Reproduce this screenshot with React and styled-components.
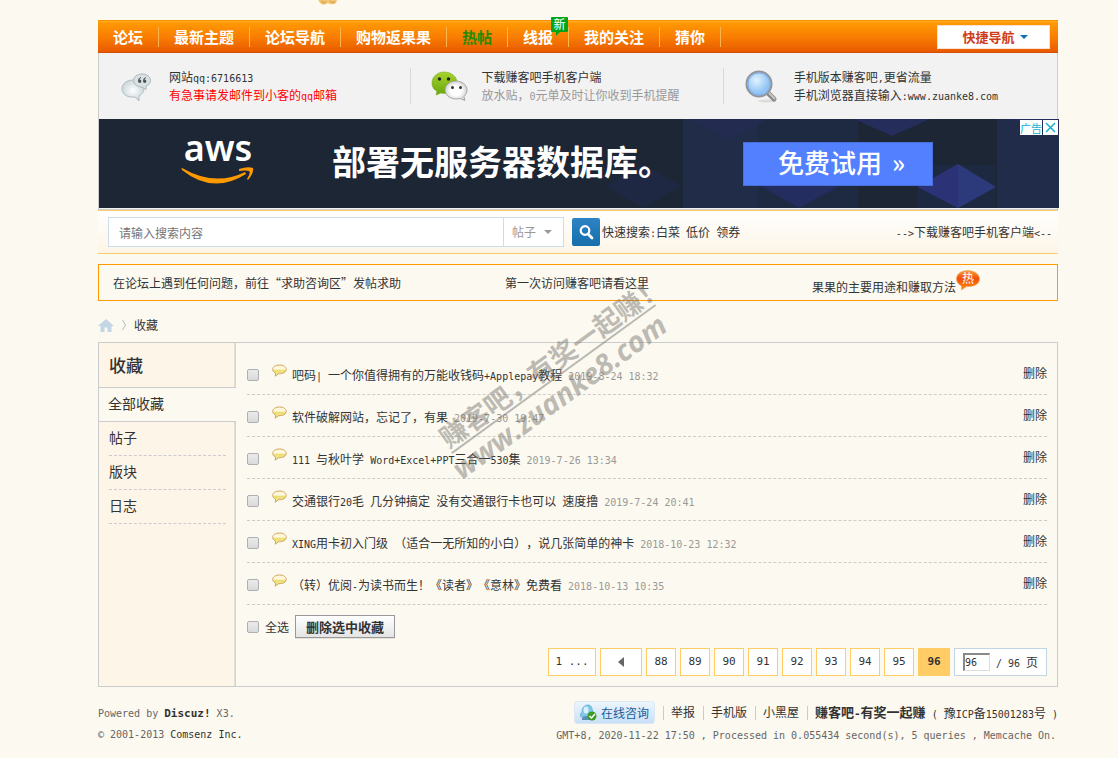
import React from 'react';
import styled, { createGlobalStyle } from 'styled-components';

const CJK = '"Noto Sans CJK SC", "Liberation Sans", sans-serif';
const MONO = '"DejaVu Sans Mono", "Liberation Mono", monospace';

const GlobalStyle = createGlobalStyle`
  * { box-sizing: border-box; }
  body {
    margin: 0;
    background: #fcf9f0;
    color: #333;
    font: 12px/18px ${CJK};
    text-spacing-trim: space-all;
  }
  a { color: inherit; text-decoration: none; }
  ul { list-style: none; margin: 0; padding: 0; }
  button, input, select { font: inherit; color: inherit; }
  svg { display: block; flex: none; }
`;

const Latin = styled.span`
  font-family: ${MONO};
  font-size: ${(p) => (p.$bold ? 11 : 10)}px;
  line-height: 1;
  white-space: pre-wrap;
`;

/* Sets runs of Latin letters, digits and spaces in the half-width face. */
function Mixed({ children, bold }) {
  return String(children)
    .split(/([\x20-\x7e©]+)/)
    .filter(Boolean)
    .map((part, i) =>
      /^[\x20-\x7e©]/.test(part) ? (
        <Latin key={i} $bold={bold}>{part}</Latin>
      ) : (
        <React.Fragment key={i}>{part}</React.Fragment>
      )
    );
}

const Page = styled.div`
  padding: 0 60px 0 98px;
  min-width: 1118px;
`;

const Top = styled.div`
  height: 20px;
  padding-left: 220px;
`;

/* ---------- navigation ---------- */
const Nav = styled.nav`
  display: flex;
  align-items: center;
  height: 33px;
  padding-right: 8px;
  border: 1px solid #f79a1c;
  border-width: 1px 0;
  border-top-color: #fb9200;
  border-bottom-color: #d24f05;
  background: linear-gradient(#ffae2e 0, #ff9803 2px, #f97f02 50%, #e85a00 100%);
`;

const NavList = styled.ul`
  display: flex;
  flex: 1;
`;

const NavItem = styled.li`
  position: relative;
  padding: 0 15px;
  border-right: 1px solid #ffb54f;
  font-size: 15px;
  line-height: 20px;
  font-weight: bold;
  color: ${(p) => (p.$hot ? '#228b00' : '#fff')};
`;

const NewBadge = styled.span`
  position: absolute;
  right: 0;
  top: -10px;
  width: 17px;
  height: 15px;
  border-radius: 1px;
  background: #03a517;
  color: #fff;
  font-size: 12px;
  line-height: 14px;
  font-weight: normal;
  text-align: center;

  &::after {
    content: '';
    position: absolute;
    left: 5px;
    top: 15px;
    border: solid transparent;
    border-width: 0 4px 4px 0;
    border-left: 0;
    border-top: 4px solid #03a517;
  }
`;

const QuickNav = styled.button`
  display: flex;
  align-items: center;
  justify-content: center;
  gap: 5px;
  width: 113px;
  height: 24px;
  padding: 0 0 0 3px;
  border: 1px solid #f6e3d4;
  background: #fff;
  color: #cf3c1c;
  font-size: 13px;
  font-weight: bold;
`;

/* ---------- info strip and banner ---------- */
const Panel = styled.section`
  padding-bottom: 1px;
  border: 1px solid #cdcdcd;
  border-top: 0;
  background: #f2f2f2;
`;

const InfoGrid = styled.div`
  display: grid;
  grid-template-columns: 15fr 15fr 16fr;
  padding: 15px 0;
`;

const InfoCell = styled.div`
  display: flex;
  align-items: center;
  gap: 10px;
  height: 36px;
  padding-left: 20px;
  border-right: ${(p) => (p.$last ? 0 : '1px solid #d9d9d9')};
`;

const InfoIcon = styled.span`
  width: 40px;
`;

const InfoLine = styled.div`
  color: ${(p) => p.$color || '#333'};
`;

const Banner = styled.div`
  position: relative;
  display: flex;
  align-items: center;
  height: 89px;
  margin-right: -2px;
  padding-left: 82px;
  background: #1c2635;
  color: #fff;
`;

const BannerArt = styled.svg`
  position: absolute;
  right: 0;
  top: 0;
`;

const AwsLogo = styled.div`
  display: flex;
  flex-direction: column;
  align-items: center;
  gap: 8px;
  width: 74px;
  padding-bottom: 6px;
  font: 600 36px/22px "Noto Sans", "Open Sans", sans-serif;
`;

const Headline = styled.strong`
  position: relative;
  flex: none;
  margin: 0 71px 0 77px;
  padding-bottom: 6px;
  font-size: 34px;
  line-height: 44px;
`;

const TrialButton = styled.a`
  position: relative;
  width: 190px;
  height: 44px;
  padding-left: 34px;
  border: 1px solid #4a70dc;
  background: #5380ff;
  font-size: 26px;
  line-height: 38px;
  font-weight: 500;
  white-space: nowrap;

  span { margin-left: 10px; }
`;

const AdChoices = styled.div`
  position: absolute;
  right: 1px;
  top: 1px;
  display: flex;
  gap: 1px;
`;

const AdTag = styled.span`
  height: 15px;
  width: ${(p) => (p.$wide ? 22 : 15)}px;
  display: flex;
  align-items: center;
  justify-content: center;
  background: #fff;
  color: #13b1d0;
  font-size: 11px;
  line-height: 14px;
`;

/* ---------- search ---------- */
const SearchBar = styled.form`
  display: flex;
  align-items: center;
  height: 44px;
  padding: 0 6px 0 10px;
  border: solid #ffcc66;
  border-width: 1px 0;
  background: linear-gradient(#fff, #fdf5e7);
`;

const SearchBox = styled.div`
  display: flex;
  align-items: center;
  width: 456px;
  height: 30px;
  border: 1px solid #cbdde8;
  background: #fff;
`;

const SearchInput = styled.input`
  flex: 1;
  min-width: 0;
  height: 28px;
  padding: 0 10px;
  border: 0;
  background: none;
  &::placeholder { color: #757575; opacity: 1; }
`;

const ScopeBox = styled.label`
  display: flex;
  align-items: center;
  gap: 4px;
  width: 60px;
  height: 28px;
  padding-left: 8px;
  border-left: 1px solid #cbdde8;
  color: #999;
`;

const ScopeSelect = styled.select`
  width: 28px;
  padding: 0;
  border: 0;
  background: none;
  appearance: none;
`;

const SearchButton = styled.button`
  width: 28px;
  height: 28px;
  margin: 0 2px 0 8px;
  padding: 5px;
  border: 0;
  border-radius: 2px;
  background: linear-gradient(#2f83c4, #146fab);
`;

const AppLink = styled.a`
  margin-left: auto;
`;

/* ---------- notices and breadcrumb ---------- */
const Notices = styled.section`
  display: grid;
  grid-template-columns: 392fr 307fr 245fr;
  align-items: center;
  height: 37px;
  margin-top: 10px;
  padding-left: 14px;
  border: 1px solid #ff9900;
`;

const HotNotice = styled.a`
  display: flex;
  align-items: flex-end;
  height: 26px;
`;

const HotMark = styled.span`
  position: relative;
  align-self: flex-start;
  color: #fff;

  b {
    position: absolute;
    inset: 0;
    font-size: 12px;
    line-height: 16px;
    font-weight: normal;
    text-align: center;
  }
`;

const Breadcrumb = styled.nav`
  display: flex;
  align-items: center;
  gap: 8px;
  height: 18px;
  margin: 15px 0 8px;
`;

/* ---------- main box ---------- */
const Main = styled.main`
  position: relative;
  display: flex;
  border: 1px solid #ccc;
`;

const Sidebar = styled.aside`
  width: 137px;
  background: linear-gradient(90deg, #fdf5e8 135px, #efe8dc 135px, #d9d5cc 136px);
`;

const SideTitle = styled.h1`
  margin: 0;
  padding: 0 10px;
  border-bottom: 1px solid #ccc;
  font-size: 17px;
  line-height: 44px;
  font-weight: 500;
`;

const SideItem = styled.li`
  height: 34px;
  font-size: 14px;
  line-height: 30px;
  ${(p) =>
    p.$active
      ? 'padding-left: 9px; border-bottom: 1px solid #ccc; background: #fcf9f0;'
      : 'margin: 0 10px; border-bottom: 1px dashed #ccc;'}
`;

const Content = styled.form`
  flex: 1;
  min-width: 0;
  padding: 10px;
  padding-left: 11px;
`;

const Row = styled.li`
  display: flex;
  align-items: center;
  height: 42px;
  padding-top: 2px;
  border-bottom: 1px dashed #ccc;
`;

const Check = styled.input.attrs({ type: 'checkbox' })`
  appearance: none;
  width: 12px;
  height: 12px;
  margin: 0;
  border: 1px solid #adb0b2;
  border-radius: 2px;
  background: linear-gradient(#ebebeb, #dadada);
  &:checked { background: #7795bd; }
`;

const RowIcon = styled.span`
  align-self: flex-start;
  margin: 9px 5px 0 13px;
`;

const Stamp = styled.time`
  margin-left: 6px;
  color: #999;
`;

const RemoveLink = styled.a`
  margin: 0 0 4px auto;
`;

const Actions = styled.div`
  display: flex;
  align-items: center;
  gap: 6px;
  height: 43px;
`;

const ActionLabel = styled.label`
  display: flex;
  align-items: center;
  gap: 6px;
`;

const DeleteButton = styled.button`
  height: 23px;
  padding: 0 8px;
  border: 1px solid #999;
  background: linear-gradient(#fff, #e4e4e4);
  box-shadow: 0 1px 0 #e6e3dc;
  width: 100px;
  font-size: 13px;
  line-height: 20px;
  font-weight: bold;
  white-space: nowrap;
`;

const Pager = styled.nav`
  display: flex;
  justify-content: flex-end;
  gap: 4px;
`;

const PageLink = styled.a`
  display: flex;
  align-items: center;
  justify-content: center;
  width: ${(p) => p.$width || 30}px;
  height: 28px;
  border: 1px solid #ffcc66;
  background: ${(p) => (p.$current ? '#ffcc66' : '#fff')};
  font: ${(p) => (p.$current ? 'bold' : 'normal')} 11px/18px ${MONO};
`;

const Jump = styled.label`
  display: flex;
  align-items: center;
  gap: 6px;
  width: 93px;
  height: 28px;
  padding-left: 8px;
  border: 1px solid #c2d5e3;
  background: #fff;
`;

const JumpInput = styled.input`
  width: 27px;
  height: 18px;
  padding: 0;
  border: 2px solid;
  border-width: 2px 1px 1px 2px;
  border-color: #888 #ddd #ddd #888;
  background: #fff;
  font: 10px/14px ${MONO};
`;

/* ---------- watermark ---------- */
const Watermark = styled.div`
  position: absolute;
  left: 455px;
  top: 37px;
  width: 280px;
  margin: -33px 0 0 -140px;
  transform: rotate(-36deg);
  color: rgba(116, 116, 108, 0.48);
  font-weight: bold;
  white-space: nowrap;
  pointer-events: none;
`;

const WatermarkSlogan = styled.div`
  margin: 0 14px;
  border-bottom: 2px solid currentColor;
  font-size: 27px;
  line-height: 31px;
`;

const WatermarkSite = styled.div`
  padding-left: 6px;
  font: italic bold 29px/32px "Open Sans", sans-serif;
`;

/* ---------- footer ---------- */
const Footer = styled.footer`
  display: flex;
  justify-content: space-between;
  padding: 14px 0 10px;
  color: #666;
`;

const Credit = styled.p`
  margin: 2px 0 3px;
  a { color: #333; }
`;

const FootLinks = styled.div`
  display: flex;
  align-items: center;
  justify-content: flex-end;
  color: #333;
`;

const FootLink = styled.a`
  height: 14px;
  margin-left: 8px;
  padding-left: 7px;
  border-left: 1px solid #ccc;
  line-height: 12px;
  font-size: ${(p) => (p.$bold ? 13 : 12)}px;
  font-weight: ${(p) => (p.$bold ? 'bold' : 'normal')};
`;

const Consult = styled.a`
  display: flex;
  align-items: center;
  gap: 4px;
  width: 81px;
  height: 23px;
  padding-left: 5px;
  border: 1px solid #dce8f4;
  border-radius: 3px;
  background: linear-gradient(#edf5fc, #c9dff8);
  color: #1a5c98;
`;

const Timing = styled.p`
  margin: 1px 2px 0 0;
  text-align: right;
`;

/* ---------- drawings ---------- */
const Caret = ({ color }) => (
  <svg width="8" height="4" viewBox="0 0 8 4"><path d="M0 0h8L4 4z" fill={color} /></svg>
);

const Mascot = () => (
  <svg width="20" height="5" viewBox="0 0 20 5">
    <path d="M0 0h19l-1 3q-3 2-6 1l-2-1q-4 3-7 1z" fill="#f1c673" />
    <path d="M3 1q3 3 5 1M12 1q3 3 5 1" stroke="#dc9948" fill="none" />
  </svg>
);

const QuoteIcon = () => (
  <svg width="34" height="32" viewBox="-2 0 34 32">
    <defs>
      <radialGradient id="qg"><stop offset="0" stopColor="#fff" /><stop offset="1" stopColor="#ccd7da" /></radialGradient>
    </defs>
    <path d="M12 10C6 10 1 13.500 1 18.500S5 27 11 27h3l4 4 0-5c3-2 5-4 5-8s-5-8-11-8z" fill="url(#qg)" stroke="#b0bec2" />
    <path d="M21 4c-5 0-8.500 3-8.500 6.500s4 6.500 8.500 6.500l4 2.500v-3.500c3-1 4.500-3 4.500-5.500 0-4-4-6.500-8.500-6.500z" fill="#d9e1e3" stroke="#a9b7bb" />
    <path d="M20 7q-3 1-3 4 0 2 1.700 2t1.700-1.700-1.900-1.800q0-1 1.500-1.500zM25 7q-3 1-3 4 0 2 1.700 2t1.700-1.700-1.900-1.800q0-1 1.500-1.500z" fill="#4b5558" />
  </svg>
);

const WechatIcon = () => (
  <svg width="38" height="32" viewBox="0 0 38 32">
    <defs>
      <linearGradient id="wg" x2="0" y2="1"><stop offset="0" stopColor="#a5d42b" /><stop offset="1" stopColor="#68a70b" /></linearGradient>
      <radialGradient id="ww"><stop offset=".5" stopColor="#fff" /><stop offset="1" stopColor="#d2d2d2" /></radialGradient>
    </defs>
    <path d="M13 2C6 2 1 7 1 13c0 4 2 7 5 8l-1 4 5-2c8 2 16-3 16-10S20 2 13 2z" fill="url(#wg)" stroke="#79a92b" strokeWidth=".6" />
    <path d="M25 11c-6 0-11 4-11 9s5 9 11 9l4-.5 5 2-1-4c2-2 3-4 3-6.500 0-5-5-9-11-9z" fill="url(#ww)" stroke="#999" strokeWidth=".8" />
    <circle cx="8.500" cy="9" r="1.700" fill="#222" /><circle cx="17.500" cy="9" r="1.700" fill="#222" />
    <circle cx="21.500" cy="17.500" r="1.500" fill="#333" /><circle cx="29.500" cy="17.500" r="1.500" fill="#333" />
  </svg>
);

const MagnifierIcon = () => (
  <svg width="34" height="34" viewBox="0 0 34 34">
    <defs>
      <radialGradient id="mg" cx=".4" cy=".35"><stop offset="0" stopColor="#e1f3ff" /><stop offset="1" stopColor="#91c4f5" /></radialGradient>
    </defs>
    <ellipse cx="23" cy="32" rx="9" ry="1.500" fill="#dcdcdc" />
    <path d="M24 24l6 6" stroke="#8a8a8a" strokeWidth="5" strokeLinecap="round" />
    <path d="M24 23l6.500 6.500" stroke="#c7c7c7" strokeWidth="2" strokeLinecap="round" />
    <circle cx="15" cy="15" r="12.500" fill="url(#mg)" stroke="#8f959c" strokeWidth="2" />
    <circle cx="15" cy="15" r="11" fill="none" stroke="#82aee6" />
  </svg>
);

const Swoosh = () => (
  <svg width="74" height="18" viewBox="0 0 74 18">
    <path d="M1 1Q34 20 64 5l1 2Q32 28 1 3q-1-2 0-2z" fill="#ff9900" />
    <path d="M58 2q9-3 14-1 1 5-5 12l-1-1q4-6 2-8-3-1-10 0z" fill="#ff9900" />
  </svg>
);

const Bubble = () => (
  <svg width="15" height="14" viewBox="0 0 15 14">
    <defs>
      <linearGradient id="bg" x2="0" y2="1"><stop offset="0" stopColor="#fff1cc" /><stop offset=".35" stopColor="#fff9e4" /><stop offset=".5" stopColor="#ebdd6e" /><stop offset="1" stopColor="#f7efa6" /></linearGradient>
    </defs>
    <path d="M7.500 1C3.500 1 .7 2.900.7 5.300c0 1.800 1.100 3 2.800 3.700L3.300 12.200l3.200-2.500c4.600.2 7.700-1.600 7.700-4.400C14.200 2.900 11.500 1 7.500 1z" fill="url(#bg)" stroke="#d1a561" strokeWidth="1" />
  </svg>
);

const HotBubble = () => (
  <svg width="24" height="21" viewBox="0 0 24 21">
    <defs>
      <linearGradient id="hg" x2="0" y2="1"><stop offset="0" stopColor="#f7a13c" /><stop offset=".4" stopColor="#f04f09" /><stop offset="1" stopColor="#ff8a05" /></linearGradient>
    </defs>
    <path d="M12 .5C5 .5.500 4 .5 9c0 3 2 5.500 5 7l0 4 5-3.500C18 17 23.500 14 23.500 9S18 .5 12 .5z" fill="url(#hg)" stroke="#f3a45c" strokeWidth=".6" />
  </svg>
);

const HomeIcon = () => (
  <svg width="16" height="13" viewBox="0 0 16 13">
    <path d="M8 0L0 7h2.500v6h4V8.500h3V13h4V7H16z" fill="#c3d6e3" />
  </svg>
);

const ConsultIcon = () => (
  <svg width="17" height="17" viewBox="0 0 17 17">
    <path d="M8 1C4 1 2 4 2 8c-2 2-2 4-1 5h12c1-2 1-4-.5-6C12 3 11 1 8 1z" fill="#83c8e9" stroke="#4ba2cc" strokeWidth=".6" />
    <ellipse cx="6" cy="6" rx="2.500" ry="3.500" fill="#d8f2fd" />
    <path d="M2 14q4-4 8 0v2H2z" fill="#5b8eb4" />
    <circle cx="12" cy="12" r="4.500" fill="#3d9b22" />
    <path d="M9.500 12l2 2 3.500-4" stroke="#fff" strokeWidth="1.500" fill="none" />
  </svg>
);

const nav = ['论坛', '最新主题', '论坛导航', '购物返果果', '热帖', '线报', '我的关注', '猜你'];

const favorites = [
  ['吧码| 一个你值得拥有的万能收钱码+Applepay教程', '2019-8-24 18:32'],
  ['软件破解网站，忘记了，有果', '2019-7-30 19:47'],
  ['111 与秋叶学 Word+Excel+PPT三合一530集', '2019-7-26 13:34'],
  ['交通银行20毛 几分钟搞定 没有交通银行卡也可以 速度撸', '2019-7-24 20:41'],
  ['XING用卡初入门级 （适合一无所知的小白），说几张简单的神卡', '2018-10-23 12:32'],
  ['（转）优阅-为读书而生！《读者》《意林》免费看', '2018-10-13 10:35'],
];

const pages = [88, 89, 90, 91, 92, 93, 94, 95];

export default function App() {
  return (
    <Page>
      <GlobalStyle />
      <Top><Mascot /></Top>

      <Nav>
        <NavList>
          {nav.map((name) => (
            <NavItem key={name} $hot={name === '热帖'}>
              <a href="#nav">{name}</a>
              {name === '线报' && <NewBadge>新</NewBadge>}
            </NavItem>
          ))}
        </NavList>
        <QuickNav type="button">快捷导航<Caret color="#0d6fb8" /></QuickNav>
      </Nav>

      <Panel>
        <InfoGrid>
          <InfoCell>
            <InfoIcon><QuoteIcon /></InfoIcon>
            <div>
              <InfoLine><Mixed>网站qq:6716613</Mixed></InfoLine>
              <InfoLine $color="#f00"><Mixed>有急事请发邮件到小客的qq邮箱</Mixed></InfoLine>
            </div>
          </InfoCell>
          <InfoCell>
            <InfoIcon><WechatIcon /></InfoIcon>
            <div>
              <InfoLine>下载赚客吧手机客户端</InfoLine>
              <InfoLine $color="#999"><Mixed>放水贴，0元单及时让你收到手机提醒</Mixed></InfoLine>
            </div>
          </InfoCell>
          <InfoCell $last>
            <InfoIcon><MagnifierIcon /></InfoIcon>
            <div>
              <InfoLine><Mixed>手机版本赚客吧,更省流量</Mixed></InfoLine>
              <InfoLine><Mixed>手机浏览器直接输入:www.zuanke8.com</Mixed></InfoLine>
            </div>
          </InfoCell>
        </InfoGrid>

        <Banner>
          <BannerArt width="480" height="89" viewBox="0 0 480 89">
            <path d="M104 0h75v89h-75z" fill="#202c48" />
            <path d="M179 0h100v89H179z" fill="#1e2a42" />
            <path d="M339 46h78v43h-78z" fill="#1d2940" />
            <path d="M418 0h62v89h-62z" fill="#212b4a" />
            <path d="M110 0h78l-38 21z" fill="#232b50" />
            <path d="M275 0h76l-38 17z" fill="#252d5a" />
            <path d="M26 67l38-22 38 22-38 22z" fill="#1f2843" />
            <path d="M182 67l38-22 40 22-40 22z" fill="#242d60" />
            <path d="M339 68l40-23 38 23-38 21z" fill="#2c3a7c" />
            <path d="M339 68l40-23v44z" fill="#2b3276" />
            <path d="M430 0h50v14z" fill="#272b5c" />
          </BannerArt>
          <AwsLogo>aws<Swoosh /></AwsLogo>
          <Headline>部署无服务器数据库。</Headline>
          <TrialButton href="#trial">免费试用<span>»</span></TrialButton>
          <AdChoices>
            <AdTag $wide>广告</AdTag>
            <AdTag>
              <svg width="11" height="11" viewBox="0 0 11 11"><path d="M1 1l9 9M10 1l-9 9" stroke="#13b1d0" strokeWidth="1.500" /></svg>
            </AdTag>
          </AdChoices>
        </Banner>
      </Panel>

      <SearchBar>
        <SearchBox>
          <SearchInput type="text" aria-label="搜索" placeholder="请输入搜索内容" />
          <ScopeBox>
            <ScopeSelect aria-label="范围"><option>帖子</option></ScopeSelect>
            <Caret color="#999" />
          </ScopeBox>
        </SearchBox>
        <SearchButton type="button" aria-label="搜索">
          <svg width="18" height="18" viewBox="0 0 18 18" fill="none" stroke="#fff">
            <circle cx="8" cy="7.500" r="4.300" strokeWidth="2.200" />
            <path d="M11 11l4 4" strokeWidth="2.800" strokeLinecap="round" />
          </svg>
        </SearchButton>
        <span><Mixed>快速搜索:白菜 低价 领券</Mixed></span>
        <AppLink href="#app"><Mixed>{'-->下载赚客吧手机客户端<--'}</Mixed></AppLink>
      </SearchBar>

      <Notices>
        <a href="#help">在论坛上遇到任何问题，前往“求助咨询区”发帖求助</a>
        <a href="#first">第一次访问赚客吧请看这里</a>
        <HotNotice href="#guoguo">
          果果的主要用途和赚取方法
          <HotMark><HotBubble /><b>热</b></HotMark>
        </HotNotice>
      </Notices>

      <Breadcrumb>
        <a href="#home" aria-label="首页"><HomeIcon /></a>
        <svg width="4" height="10" viewBox="0 0 4 10"><path d="M.5 0l3 5-3 5" stroke="#b5b9bb" fill="none" /></svg>
        <a href="#fav">收藏</a>
      </Breadcrumb>

      <Main>
        <Sidebar>
          <SideTitle>收藏</SideTitle>
          <ul>
            <SideItem $active><a href="#all">全部收藏</a></SideItem>
            <SideItem><a href="#threads">帖子</a></SideItem>
            <SideItem><a href="#forums">版块</a></SideItem>
            <SideItem><a href="#blogs">日志</a></SideItem>
          </ul>
        </Sidebar>

        <Content>
          <ul>
            {favorites.map(([title, date]) => (
              <Row key={title}>
                <Check aria-label={title} />
                <RowIcon><Bubble /></RowIcon>
                <a href="#thread"><Mixed>{title}</Mixed></a>
                <Stamp><Mixed>{date}</Mixed></Stamp>
                <RemoveLink href="#remove">删除</RemoveLink>
              </Row>
            ))}
          </ul>
          <Actions>
            <ActionLabel><Check />全选</ActionLabel>
            <DeleteButton type="button">删除选中收藏</DeleteButton>
          </Actions>
          <Pager>
            <PageLink href="#p1" $width={48}>1 ...</PageLink>
            <PageLink href="#prev" $width={42} aria-label="上一页">
              <svg width="6" height="10" viewBox="0 0 6 10"><path d="M6 0v10L0 5z" fill="#666" /></svg>
            </PageLink>
            {pages.map((n) => (
              <PageLink key={n} href="#page">{n}</PageLink>
            ))}
            <PageLink href="#page" $current $width={32}>96</PageLink>
            <Jump>
              <JumpInput type="text" defaultValue="96" />
              <span><Mixed>/ 96 页</Mixed></span>
            </Jump>
          </Pager>
        </Content>

        <Watermark>
          <WatermarkSlogan>赚客吧，有奖一起赚！</WatermarkSlogan>
          <WatermarkSite>www.zuanke8.com</WatermarkSite>
        </Watermark>
      </Main>

      <Footer>
        <div>
          <Credit>
            <Mixed>{'Powered by '}</Mixed>
            <a href="#discuz"><b><Mixed bold>Discuz!</Mixed></b></a>
            <Mixed>{' X3.'}</Mixed>
          </Credit>
          <Credit>
            <Mixed>{'© 2001-2013 '}</Mixed>
            <a href="#comsenz"><Mixed>Comsenz Inc.</Mixed></a>
          </Credit>
        </div>
        <div>
          <FootLinks>
            <Consult href="#consult"><ConsultIcon />在线咨询</Consult>
            <FootLink href="#report">举报</FootLink>
            <FootLink href="#mobile">手机版</FootLink>
            <FootLink href="#dark">小黑屋</FootLink>
            <FootLink href="#home" $bold><Mixed bold>赚客吧-有奖一起赚</Mixed></FootLink>
            <span><Mixed>{' ( 豫ICP备15001283号 )'}</Mixed></span>
          </FootLinks>
          <Timing>
            <Mixed>GMT+8, 2020-11-22 17:50 , Processed in 0.055434 second(s), 5 queries , Memcache On.</Mixed>
          </Timing>
        </div>
      </Footer>
    </Page>
  );
}
